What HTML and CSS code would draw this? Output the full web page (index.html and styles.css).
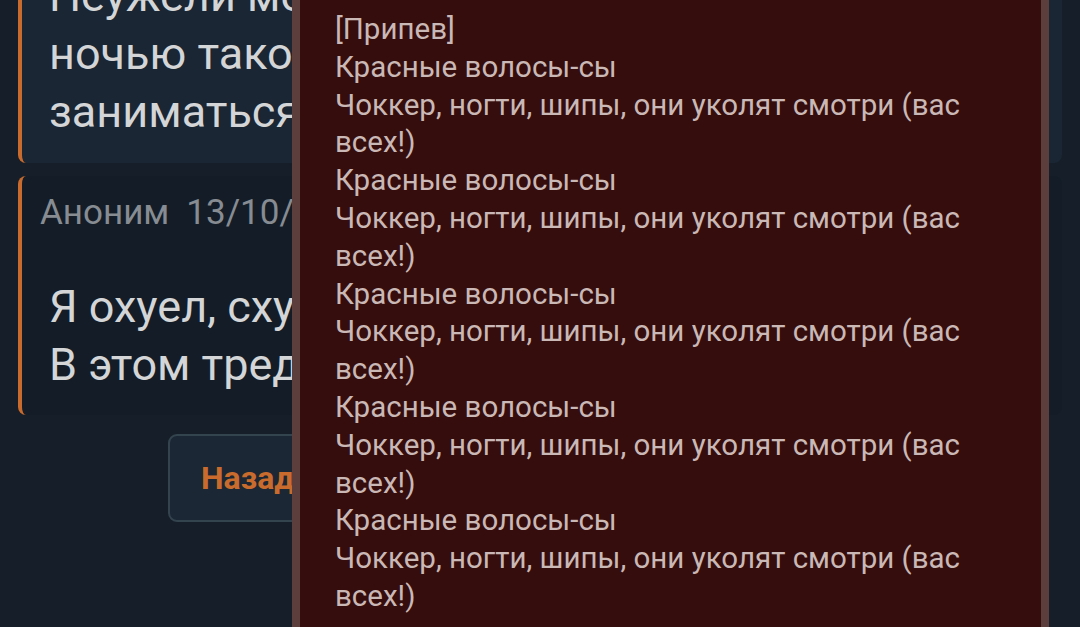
FILE: index.html
```html
<!DOCTYPE html>
<html lang="ru">
<head>
<meta charset="utf-8">
<title>Тред</title>
<link rel="stylesheet" href="styles.css">
</head>
<body>
<main class="thread">
  <article class="post post-op">
    <div class="post-body">Неужели можно<br>ночью такой хуйнёй<br>заниматься</div>
  </article>
  <article class="post post-reply">
    <header class="post-head"><span class="name">Аноним</span><span class="date">13/10/24 Вск 03:12:45</span></header>
    <div class="post-body">Я охуел, схуяли ты тут<br>В этом треде</div>
  </article>
  <div class="nav">
    <button class="btn">Назад</button>
  </div>
</main>
<aside class="lyrics">
  <div class="lyrics-text">[Припев]<br>Красные волосы-сы<br>Чоккер, ногти, шипы, они уколят смотри (вас всех!)<br>Красные волосы-сы<br>Чоккер, ногти, шипы, они уколят смотри (вас всех!)<br>Красные волосы-сы<br>Чоккер, ногти, шипы, они уколят смотри (вас всех!)<br>Красные волосы-сы<br>Чоккер, ногти, шипы, они уколят смотри (вас всех!)<br>Красные волосы-сы<br>Чоккер, ногти, шипы, они уколят смотри (вас всех!)</div>
</aside>
</body>
</html>
```

FILE: styles.css
```css
html, body {
  margin: 0;
  padding: 0;
  height: 100%;
  overflow: hidden;
}
body {
  background: #161f29;
  font-family: Roboto, "Noto Sans", sans-serif;
  color: #d2d4d6;
}
.thread {
  display: flex;
  flex-direction: column;
  gap: 13px;
  padding: 0 18px;
  margin-top: -53px;
}
.post {
  border-left: 4px solid #c96b2c;
  border-radius: 8px;
  padding: 20px 18px 22px 18px;
}
.post-op {
  background: #1a2633;
}
.post-reply {
  background: #141d27;
  padding-top: 16px;
  padding-bottom: 21px;
}
.post-head {
  font-size: 35px;
  line-height: 42px;
  color: #878c92;
  display: flex;
  gap: 17px;
  white-space: nowrap;
  margin-bottom: 44px;
}
.post-body {
  font-size: 45px;
  line-height: 58px;
  color: #d3d5d7;
  margin-left: 9px;
  white-space: nowrap;
}
.nav {
  display: flex;
  padding-left: 150px;
  margin-top: 6px;
}
.btn {
  font-family: Roboto, "Noto Sans", sans-serif;
  font-weight: 700;
  font-size: 32px;
  color: #c96b2c;
  background: #1b2734;
  border: 2px solid #34444f;
  border-radius: 9px;
  height: 88px;
  padding: 0 31px;
}
.lyrics {
  position: fixed;
  top: 0;
  bottom: 0;
  left: 292px;
  width: 757px;
  background: #350d0c;
  border-left: 8px solid #5c3e3d;
  border-right: 8px solid #5c3e3d;
  padding: 11px 40px 0 35px;
  box-sizing: border-box;
}
.lyrics-text {
  font-size: 29.5px;
  line-height: 37.8px;
  color: #cab8b6;
}
```
